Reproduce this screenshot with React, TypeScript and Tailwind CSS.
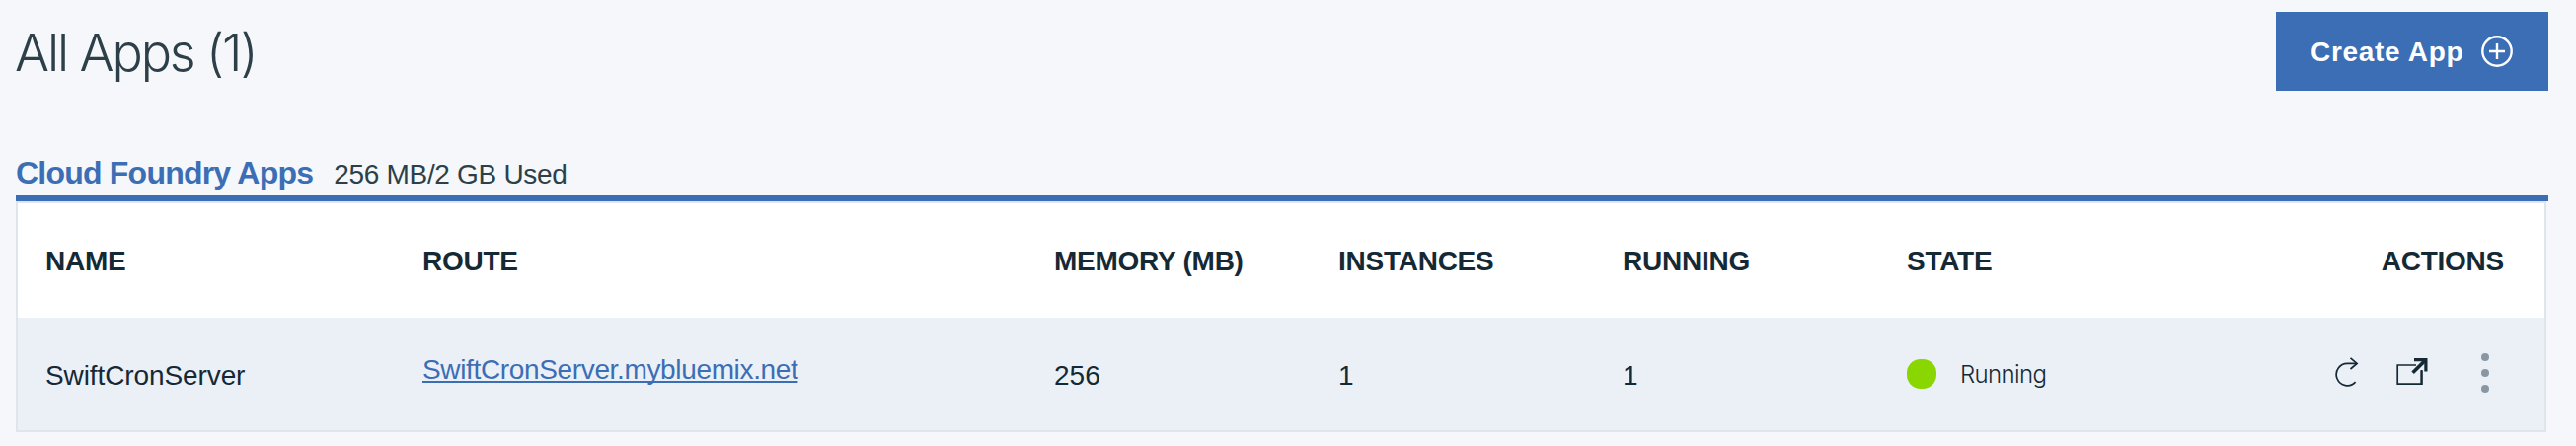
const columns = [
  { label: "NAME", width: "w-[382px]" },
  { label: "ROUTE", width: "w-[640px]" },
  { label: "MEMORY (MB)", width: "w-[288px]" },
  { label: "INSTANCES", width: "w-[288px]" },
  { label: "RUNNING", width: "w-[288px]" },
  { label: "STATE", width: "w-[288px]" },
];

function PlusCircle() {
  return (
    <svg className="size-8" viewBox="0 0 32 32" fill="none" stroke="#fff" strokeWidth="2.4">
      <circle cx="16" cy="16" r="14.7" />
      <path d="M16 8v16M8 16h16" />
    </svg>
  );
}

function Restart() {
  return (
    <svg className="h-[30px] w-[24px]" viewBox="0 0 24 30" fill="none" stroke="#152935" strokeWidth="1.7">
      <path d="M22 6.4H13A11.2 11.2 0 1 0 20.6 25.2" />
      <path d="M15.5 .8l6.6 5.6-6.6 5.6" />
    </svg>
  );
}

function OpenExternal() {
  return (
    <svg className="h-[28px] w-[32px]" viewBox="0 0 32 28" fill="none" stroke="#152935">
      <path d="M20 7H1.2v19.2h24.3V13" strokeWidth="1.7" />
      <path d="M25.6 12v15" strokeWidth="2.2" />
      <path d="M18 1.7h11.9v11.9" strokeWidth="3.2" />
      <path d="M29 2.4L16.6 14.8" strokeWidth="3.6" />
    </svg>
  );
}

function Kebab() {
  return (
    <svg className="h-[40px] w-[8px]" viewBox="0 0 8 40" fill="#8897a2">
      <circle cx="4" cy="4" r="4" />
      <circle cx="4" cy="20" r="4" />
      <circle cx="4" cy="36" r="4" />
    </svg>
  );
}

export default function App() {
  return (
    <div className="h-[452px] w-[2610px] overflow-hidden bg-[#f5f7fa] pr-7 pl-4 font-['Liberation_Sans',sans-serif] text-[28px] text-[#152935]">
      <header className="flex h-[146px] items-start justify-between pt-3">
        <h1 className="-ml-px pt-[12px] font-['Inter',sans-serif] text-[52px] leading-[60px] font-light tracking-[-2.1px] text-[#2d3f49]">
          All Apps (1)
        </h1>
        <button className="flex h-20 w-[276px] items-center justify-between bg-[#3b6eb5] pr-9 pl-[35px] font-bold tracking-[0.7px] text-white">
          <span className="pt-[2px]">Create App</span>
          <PlusCircle />
        </button>
      </header>

      <div className="flex h-[52px] items-baseline gap-[21px] leading-[58px]">
        <h2 className="text-[32px] font-bold tracking-[-0.78px] text-[#3b6eb5]">Cloud Foundry Apps</h2>
        <span className="tracking-[-0.3px] text-[#2d3f49]">256 MB/2 GB Used</span>
      </div>

      <div className="h-[6px] bg-[#3b6eb5]" />
      <section className="mr-[2px] h-[234px] border-2 border-[#dfe6eb] bg-white">
        <div className="flex h-[116px] items-center pt-px pr-[41px] pl-[28px] font-bold tracking-[-0.25px]">
          {columns.map((c) => (
            <div key={c.label} className={`${c.width} shrink-0`}>
              {c.label}
            </div>
          ))}
          <div className="grow text-right">ACTIONS</div>
        </div>
        <div className="flex h-[114px] items-center bg-[#ebf0f7] pl-[28px]">
          <div className="w-[382px] shrink-0 pt-[3px] tracking-[-0.1px]">SwiftCronServer</div>
          <div className="w-[640px] shrink-0 pb-[9px]">
            <a className="tracking-[-0.35px] text-[#3b6eb5] underline decoration-2 underline-offset-2 [text-decoration-skip-ink:none]">
              SwiftCronServer.mybluemix.net
            </a>
          </div>
          <div className="w-[288px] shrink-0 pt-[3px]">256</div>
          <div className="w-[288px] shrink-0 pt-[3px]">1</div>
          <div className="w-[288px] shrink-0 pt-[3px]">1</div>
          <div className="flex w-[434px] shrink-0 items-center gap-6">
            <span className="size-[30px] rounded-[14px] bg-[#8ad600]" />
            <span className="pt-px font-['Inter',sans-serif] text-[24px] font-light tracking-[-0.65px]">Running</span>
          </div>
          <div className="flex items-center">
            <div className="pb-[4px]">
              <Restart />
            </div>
            <span className="w-[38px]" />
            <div className="pb-[4px]">
              <OpenExternal />
            </div>
            <span className="w-[54px]" />
            <div className="pb-[2px]">
              <Kebab />
            </div>
          </div>
        </div>
      </section>
    </div>
  );
}
